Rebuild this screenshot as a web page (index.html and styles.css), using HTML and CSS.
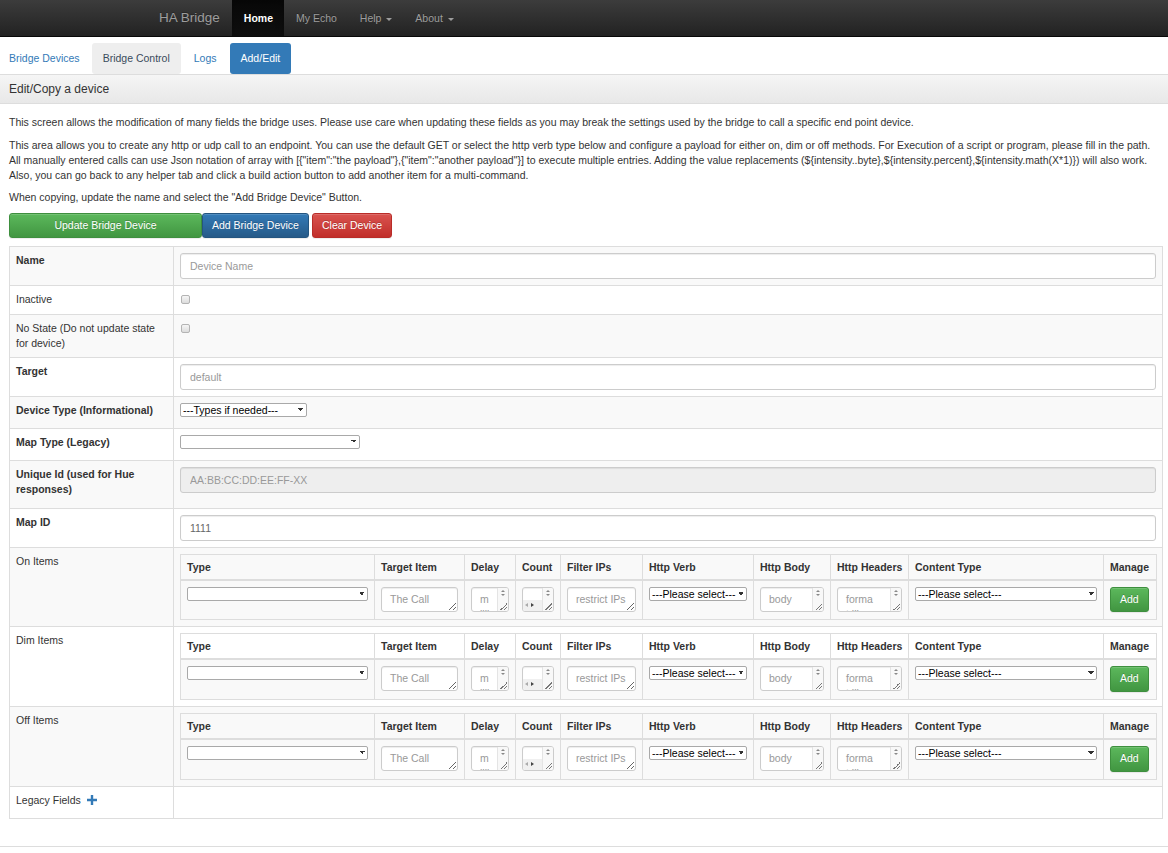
FILE: index.html
```html
<!DOCTYPE html>
<html lang="en">
<head>
    <meta charset="UTF-8">
    <meta name="viewport" content="width=device-width, initial-scale=1.0">
    <title>HA Bridge</title>
    <link rel="stylesheet" href="styles.css">
</head>
<body>

<nav class="navbar">
    <div class="navbar-inner">
        <a class="brand" href="#">HA Bridge</a>
        <ul class="nav">
            <li class="active"><a href="#">Home</a></li>
            <li><a href="#">My Echo</a></li>
            <li><a href="#">Help <span class="caret"></span></a></li>
            <li><a href="#">About <span class="caret"></span></a></li>
        </ul>
    </div>
</nav>

<ul class="pills">
    <li><a href="#">Bridge Devices</a></li>
    <li class="hover"><a href="#">Bridge Control</a></li>
    <li><a href="#">Logs</a></li>
    <li class="active"><a href="#">Add/Edit</a></li>
</ul>

<div class="panel">
    <div class="panel-heading">
        <h2 class="panel-title">Edit/Copy a device</h2>
    </div>
    <div class="panel-body">
        <p>This screen allows the modification of many fields the bridge uses. Please use care when updating these fields as you may break the settings used by the bridge to call a specific end point device.</p>
        <p class="nowrap">This area allows you to create any http or udp call to an endpoint. You can use the default GET or select the http verb type below and configure a payload for either on, dim or off methods. For Execution of a script or program, please fill in the path.<br>All manually entered calls can use Json notation of array with [{"item":"the payload"},{"item":"another payload"}] to execute multiple entries. Adding the value replacements (${intensity..byte},${intensity.percent},${intensity.math(X*1)}) will also work.<br>Also, you can go back to any helper tab and click a build action button to add another item for a multi-command.</p>
        <p>When copying, update the name and select the "Add Bridge Device" Button.</p>

        <div class="actions">
            <button class="btn btn-success btn-update">Update Bridge Device</button>
            <button class="btn btn-primary">Add Bridge Device</button>
            <button class="btn btn-danger btn-clear">Clear Device</button>
        </div>

        <table class="device-table">
            <colgroup>
                <col class="c-label">
                <col>
            </colgroup>
            <tbody>
                <tr>
                    <td><label>Name</label></td>
                    <td><input class="form-control" type="text" placeholder="Device Name"></td>
                </tr>
                <tr>
                    <td>Inactive</td>
                    <td><input class="check" type="checkbox"></td>
                </tr>
                <tr>
                    <td>No State (Do not update state for device)</td>
                    <td><input class="check" type="checkbox"></td>
                </tr>
                <tr>
                    <td><label>Target</label></td>
                    <td><input class="form-control" type="text" placeholder="default"></td>
                </tr>
                <tr>
                    <td><label>Device Type (Informational)</label></td>
                    <td><select class="sel sel-devtype"><option>---Types if needed---</option></select></td>
                </tr>
                <tr>
                    <td><label>Map Type (Legacy)</label></td>
                    <td><select class="sel sel-maptype"><option></option></select></td>
                </tr>
                <tr>
                    <td><label>Unique Id (used for Hue responses)</label></td>
                    <td><input class="form-control" type="text" readonly placeholder="AA:BB:CC:DD:EE:FF-XX"></td>
                </tr>
                <tr>
                    <td><label>Map ID</label></td>
                    <td><input class="form-control" type="text" value="1111"></td>
                </tr>
                <tr>
                    <td>On Items</td>
                    <td>
                        <table class="items">
                            <colgroup>
                                <col class="c-type"><col class="c-target"><col class="c-delay"><col class="c-count"><col class="c-ips"><col class="c-verb"><col class="c-body"><col class="c-headers"><col class="c-ctype"><col class="c-manage">
                            </colgroup>
                            <thead>
                                <tr><th>Type</th><th>Target Item</th><th>Delay</th><th>Count</th><th>Filter IPs</th><th>Http Verb</th><th>Http Body</th><th>Http Headers</th><th>Content Type</th><th>Manage</th></tr>
                            </thead>
                            <tbody>
                                <tr>
                                    <td><select class="sel sel-block"><option></option></select></td>
                                    <td><textarea class="field" placeholder="The Call"></textarea></td>
                                    <td><div class="scroll-field"><textarea class="field field-delay" placeholder="millis"></textarea><span class="vbar"></span></div></td>
                                    <td><div class="scroll-field"><textarea class="field field-count"></textarea><span class="hbar"><i class="left"></i><i class="right"></i></span><span class="vbar"></span></div></td>
                                    <td><textarea class="field" placeholder="restrict IPs"></textarea></td>
                                    <td><select class="sel sel-block"><option>---Please select---</option></select></td>
                                    <td><div class="scroll-field"><textarea class="field field-body" placeholder="body"></textarea><span class="vbar"></span></div></td>
                                    <td><div class="scroll-field"><textarea class="field field-headers" placeholder="format like [{&quot;name&quot;:&quot;A name&quot;}]"></textarea><span class="vbar"></span></div></td>
                                    <td><select class="sel sel-block"><option>---Please select---</option></select></td>
                                    <td><button class="btn btn-success">Add</button></td>
                                </tr>
                            </tbody>
                        </table>
                    </td>
                </tr>
                <tr>
                    <td>Dim Items</td>
                    <td>
                        <table class="items">
                            <colgroup>
                                <col class="c-type"><col class="c-target"><col class="c-delay"><col class="c-count"><col class="c-ips"><col class="c-verb"><col class="c-body"><col class="c-headers"><col class="c-ctype"><col class="c-manage">
                            </colgroup>
                            <thead>
                                <tr><th>Type</th><th>Target Item</th><th>Delay</th><th>Count</th><th>Filter IPs</th><th>Http Verb</th><th>Http Body</th><th>Http Headers</th><th>Content Type</th><th>Manage</th></tr>
                            </thead>
                            <tbody>
                                <tr>
                                    <td><select class="sel sel-block"><option></option></select></td>
                                    <td><textarea class="field" placeholder="The Call"></textarea></td>
                                    <td><div class="scroll-field"><textarea class="field field-delay" placeholder="millis"></textarea><span class="vbar"></span></div></td>
                                    <td><div class="scroll-field"><textarea class="field field-count"></textarea><span class="hbar"><i class="left"></i><i class="right"></i></span><span class="vbar"></span></div></td>
                                    <td><textarea class="field" placeholder="restrict IPs"></textarea></td>
                                    <td><select class="sel sel-block"><option>---Please select---</option></select></td>
                                    <td><div class="scroll-field"><textarea class="field field-body" placeholder="body"></textarea><span class="vbar"></span></div></td>
                                    <td><div class="scroll-field"><textarea class="field field-headers" placeholder="format like [{&quot;name&quot;:&quot;A name&quot;}]"></textarea><span class="vbar"></span></div></td>
                                    <td><select class="sel sel-block"><option>---Please select---</option></select></td>
                                    <td><button class="btn btn-success">Add</button></td>
                                </tr>
                            </tbody>
                        </table>
                    </td>
                </tr>
                <tr>
                    <td>Off Items</td>
                    <td>
                        <table class="items">
                            <colgroup>
                                <col class="c-type"><col class="c-target"><col class="c-delay"><col class="c-count"><col class="c-ips"><col class="c-verb"><col class="c-body"><col class="c-headers"><col class="c-ctype"><col class="c-manage">
                            </colgroup>
                            <thead>
                                <tr><th>Type</th><th>Target Item</th><th>Delay</th><th>Count</th><th>Filter IPs</th><th>Http Verb</th><th>Http Body</th><th>Http Headers</th><th>Content Type</th><th>Manage</th></tr>
                            </thead>
                            <tbody>
                                <tr>
                                    <td><select class="sel sel-block"><option></option></select></td>
                                    <td><textarea class="field" placeholder="The Call"></textarea></td>
                                    <td><div class="scroll-field"><textarea class="field field-delay" placeholder="millis"></textarea><span class="vbar"></span></div></td>
                                    <td><div class="scroll-field"><textarea class="field field-count"></textarea><span class="hbar"><i class="left"></i><i class="right"></i></span><span class="vbar"></span></div></td>
                                    <td><textarea class="field" placeholder="restrict IPs"></textarea></td>
                                    <td><select class="sel sel-block"><option>---Please select---</option></select></td>
                                    <td><div class="scroll-field"><textarea class="field field-body" placeholder="body"></textarea><span class="vbar"></span></div></td>
                                    <td><div class="scroll-field"><textarea class="field field-headers" placeholder="format like [{&quot;name&quot;:&quot;A name&quot;}]"></textarea><span class="vbar"></span></div></td>
                                    <td><select class="sel sel-block"><option>---Please select---</option></select></td>
                                    <td><button class="btn btn-success">Add</button></td>
                                </tr>
                            </tbody>
                        </table>
                    </td>
                </tr>
                <tr>
                    <td><label class="plain">Legacy Fields <svg class="plus" width="10" height="10" viewBox="0 0 10 10"><path d="M3.8 0h2.4v3.8H10v2.4H6.2V10H3.8V6.2H0V3.8h3.8z" fill="#337ab7"/></svg></label></td>
                    <td></td>
                </tr>
            </tbody>
        </table>
    </div>
</div>

</body>
</html>
```

FILE: styles.css
```css
body {
    font-family: "Liberation Sans", Arial, sans-serif;
    font-size: 10.5px;
    line-height: 15px;
    color: #333;
    margin: 0;
    background-color: #fff;
    overflow-x: hidden;
}
a {
    text-decoration: none;
}
ul {
    list-style: none;
    margin: 0;
    padding: 0;
}

/* top navbar */
.navbar {
    height: 36px;
    background-image: linear-gradient(to bottom, #3c3c3c 0, #222 100%);
    border-bottom: 1px solid #080808;
}
.navbar-inner {
    width: 872px;
    margin: 0 auto;
    display: flex;
}
.brand {
    padding: 0 12px 0 11px;
    line-height: 35px;
    font-size: 13.5px;
    color: #9d9d9d;
    text-shadow: 0 -1px 0 rgba(0, 0, 0, 0.25);
}
.nav {
    display: flex;
}
.nav a {
    display: block;
    padding: 0 11.5px;
    line-height: 36px;
    color: #9d9d9d;
    text-shadow: 0 -1px 0 rgba(0, 0, 0, 0.25);
}
.nav .active a {
    padding: 0 11.5px 0 12px;
    color: #fff;
    font-weight: bold;
    background-image: linear-gradient(to bottom, #080808 0, #0f0f0f 100%);
    box-shadow: inset 0 3px 9px rgba(0, 0, 0, 0.25);
}
.caret {
    display: inline-block;
    width: 0;
    height: 0;
    margin-left: 2px;
    vertical-align: middle;
    border-top: 3px solid;
    border-left: 3px solid transparent;
    border-right: 3px solid transparent;
}

/* tabs */
.pills {
    display: flex;
    margin: 6px 0 0 -2px;
}
.pills li + li {
    margin-left: 2px;
}
.pills a {
    display: block;
    padding: 8px 11px;
    border-radius: 3px;
    color: #337ab7;
}
.pills li:first-child a {
    padding-right: 10px;
}
.pills .hover a {
    background-color: #eee;
    color: #3a4b5c;
}
.pills .active a {
    background-color: #337ab7;
    color: #fff;
}

/* panel */
.panel {
    border-top: 1px solid #ddd;
    border-bottom: 1px solid #ddd;
}
.panel-heading {
    padding: 7.5px 9px;
    background-image: linear-gradient(to bottom, #f5f5f5 0, #e8e8e8 100%);
    border-bottom: 1px solid #ddd;
}
.panel-title {
    margin: 0;
    font-size: 12px;
    line-height: 13.2px;
    font-weight: normal;
    color: #333;
}
.panel-body {
    padding: 11px 5px 12px 9px;
}
.panel-body p {
    margin: 0 0 7.5px;
}
.nowrap {
    white-space: nowrap;
}

/* buttons */
.actions {
    display: flex;
    margin: 0 0 8px;
}
.btn {
    display: inline-block;
    height: 25.5px;
    padding: 0 9px;
    font-family: inherit;
    font-size: 10.5px;
    line-height: 23.5px;
    color: #fff;
    border: 1px solid transparent;
    border-radius: 3px;
    text-shadow: 0 -1px 0 rgba(0, 0, 0, 0.2);
    box-shadow: inset 0 1px 0 rgba(255, 255, 255, 0.15), 0 1px 1px rgba(0, 0, 0, 0.075);
    cursor: pointer;
}
.btn-success {
    background-image: linear-gradient(to bottom, #5cb85c 0, #419641 100%);
    border-color: #3e8f3e;
}
.btn-primary {
    background-image: linear-gradient(to bottom, #337ab7 0, #265a88 100%);
    border-color: #245580;
}
.btn-danger {
    background-image: linear-gradient(to bottom, #d9534f 0, #c12e2a 100%);
    border-color: #b92c28;
}
.btn-update {
    width: 193px;
}
.btn-clear {
    margin-left: 3px;
}

/* device table */
.device-table {
    width: 100%;
    table-layout: fixed;
    border-collapse: collapse;
    border: 1px solid #ddd;
    margin-bottom: 15px;
}
.device-table .c-label {
    width: 164px;
}
.device-table > tbody > tr > td {
    padding: 6px 6px 6.2px;
    border: 1px solid #ddd;
    vertical-align: top;
}
.device-table > tbody > tr:nth-child(odd) > td {
    background-color: #f9f9f9;
}
label {
    display: inline-block;
    margin-bottom: 4px;
    font-weight: bold;
}
label.plain {
    font-weight: normal;
}
.plus {
    vertical-align: -1px;
    margin-left: 3px;
}
.form-control {
    display: block;
    box-sizing: border-box;
    width: 100%;
    height: 26px;
    padding: 4.5px 9px;
    font-family: inherit;
    font-size: 10.5px;
    line-height: 15px;
    color: #666;
    background-color: #fff;
    border: 1px solid #ccc;
    border-radius: 3px;
    box-shadow: inset 0 1px 1px rgba(0, 0, 0, 0.075);
}
.form-control[readonly] {
    background-color: #eee;
}
::placeholder {
    color: #999;
    opacity: 1;
}
.check {
    -webkit-appearance: none;
    appearance: none;
    display: block;
    width: 9px;
    height: 9px;
    margin: 3px 0 0 1px;
    border: 1px solid #b4b4b4;
    border-radius: 2px;
    background-image: linear-gradient(to bottom, #f6f6f6 0, #dcdcdc 100%);
}
.sel {
    -webkit-appearance: none;
    appearance: none;
    box-sizing: border-box;
    height: 14px;
    padding: 0 8px 0 2px;
    vertical-align: top;
    font-family: inherit;
    font-size: 10.5px;
    line-height: 12px;
    color: #000;
    border: 1px solid #a9a9a9;
    border-radius: 2px;
    background-color: #fff;
    background-image: linear-gradient(45deg, transparent 50%, #333 50%), linear-gradient(135deg, #333 50%, transparent 50%);
    background-position: right 5px top 4px, right 2px top 4px;
    background-size: 3px 3px;
    background-repeat: no-repeat;
}
.sel-devtype {
    width: 127px;
}
.sel-maptype {
    width: 180px;
}
.sel-block {
    display: block;
    width: 100%;
}

/* items tables */
.items {
    width: 100%;
    table-layout: fixed;
    border-collapse: collapse;
    border: 1px solid #ddd;
}
.items .c-type { width: 194px; }
.items .c-target { width: 90px; }
.items .c-delay { width: 51px; }
.items .c-count { width: 45px; }
.items .c-ips { width: 82px; }
.items .c-verb { width: 111px; }
.items .c-body { width: 77px; }
.items .c-headers { width: 78px; }
.items .c-ctype { width: 195px; }
.items .c-manage { width: 53px; }
.items th {
    padding: 5px 6px 4px;
    text-align: left;
    font-weight: bold;
    white-space: nowrap;
    border: 1px solid #ddd;
    border-bottom: 2px solid #ddd;
}
.items td {
    padding: 6px 6px 7px;
    border: 1px solid #ddd;
    vertical-align: top;
}
.items > tbody > tr:nth-child(odd) > td {
    background-color: #f9f9f9;
}
.field {
    display: block;
    box-sizing: border-box;
    width: 100%;
    height: 25px;
    margin: 0;
    padding: 4px 6px 4px 8px;
    font-family: inherit;
    font-size: 10.5px;
    line-height: 15px;
    color: #555;
    background-color: #fff;
    border: 1px solid #ccc;
    border-radius: 3px;
    box-shadow: inset 0 1px 1px rgba(0, 0, 0, 0.075);
    overflow: hidden;
    resize: vertical;
}
.scroll-field {
    position: relative;
}
.scroll-field .field {
    resize: none;
}
.field-delay {
    padding-right: 18px;
    word-break: break-all;
}
.field-body {
    padding-right: 14px;
}
.field-headers {
    padding-right: 27px;
    word-break: break-all;
}
.vbar {
    position: absolute;
    top: 1px;
    right: 1px;
    bottom: 1px;
    width: 10px;
    background-color: #f8f8f8;
    border-left: 1px solid #e4e4e4;
    border-radius: 0 2px 2px 0;
    background-image: linear-gradient(135deg, transparent 0 50%, #777 50% 58%, transparent 58% 72%, #777 72% 80%, transparent 80%);
    background-size: 7px 7px;
    background-position: right 1px bottom 1px;
    background-repeat: no-repeat;
}
.vbar::before,
.vbar::after {
    content: "";
    position: absolute;
    left: 3px;
    border-left: 2px solid transparent;
    border-right: 2px solid transparent;
}
.vbar::before {
    top: 2px;
    border-bottom: 2px solid #888;
}
.vbar::after {
    top: 6px;
    border-top: 2px solid #888;
}
.hbar {
    position: absolute;
    left: 1px;
    bottom: 1px;
    right: 12px;
    height: 11px;
    background-color: #f0f0f0;
    border-radius: 0 0 0 2px;
}
.hbar i {
    position: absolute;
    top: 3px;
    border-top: 2.5px solid transparent;
    border-bottom: 2.5px solid transparent;
}
.hbar .left {
    left: 2px;
    border-right: 3px solid #aaa;
}
.hbar .right {
    left: 8px;
    border-left: 3px solid #444;
}
```
